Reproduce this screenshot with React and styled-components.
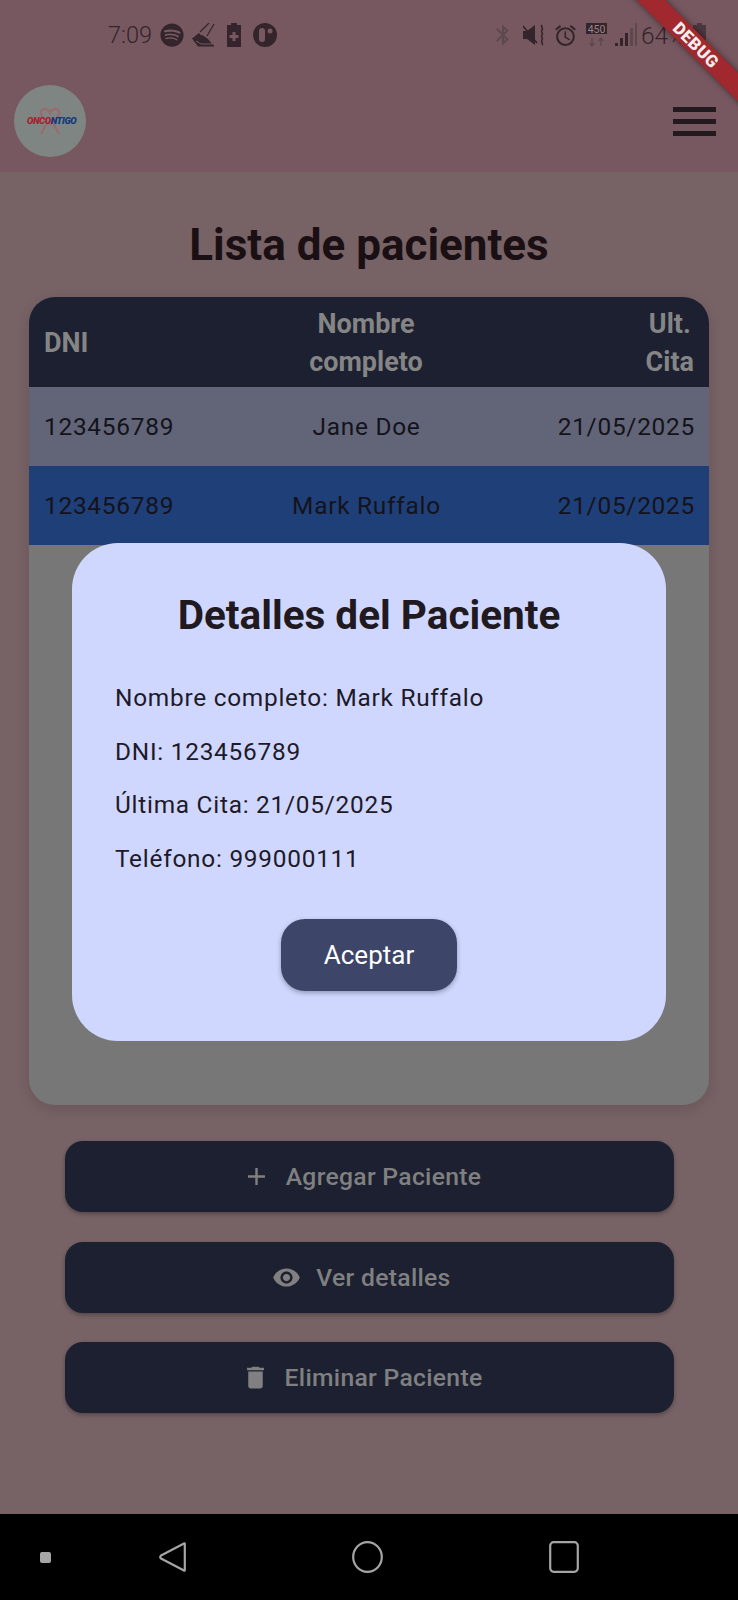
import React from 'react';
import styled, { createGlobalStyle } from 'styled-components';
import { FaSpotify } from 'react-icons/fa';
import { MdAdd, MdAlarm, MdBluetooth, MdDelete, MdVisibility } from 'react-icons/md';

const GlobalStyle = createGlobalStyle`
  html, body {
    margin: 0;
    padding: 0;
    background: #000;
  }
  * {
    box-sizing: border-box;
  }
`;

const patients = [
  { dni: '123456789', name: 'Jane Doe', date: '21/05/2025' },
  { dni: '123456789', name: 'Mark Ruffalo', date: '21/05/2025', selected: true },
];

const actions = [
  { label: 'Agregar Paciente', icon: <MdAdd size={29} /> },
  { label: 'Ver detalles', icon: <MdVisibility size={29} /> },
  { label: 'Eliminar Paciente', icon: <MdDelete size={29} /> },
];

const details = [
  'Nombre completo: Mark Ruffalo',
  'DNI: 123456789',
  'Última Cita: 21/05/2025',
  'Teléfono: 999000111',
];

const ShoeIcon = () => (
  <svg width="26" height="24" viewBox="0 0 26 24">
    <path stroke="#33252b" strokeWidth="1.200" fill="none" d="M8 9l9-9M15 13l7-12" />
    <path fill="#33252b" d="M0 15.500L7 10l1.500 2 2.500 .5 5 3.500 4 5 2 1v1.500H6z" />
    <path stroke="#775860" strokeWidth="1" fill="none" d="M4 18l5 3h12" />
  </svg>
);

const BatteryPlusIcon = () => (
  <svg width="19" height="24" viewBox="0 0 19 24">
    <path fill="#33252b" d="M5 0h6v2h4v22H1V2h4z" />
    <path fill="#775860" d="M6.500 9h3v3h3v3h-3v3h-3v-3h-3v-3h3z" />
  </svg>
);

const PillIcon = () => (
  <svg width="24" height="24" viewBox="0 0 24 24">
    <circle cx="12" cy="12" r="12" fill="#33252b" />
    <rect x="6" y="5" width="6" height="14" rx="3" fill="#775860" />
    <circle cx="17" cy="8" r="2.500" fill="#775860" />
  </svg>
);

const MuteIcon = () => (
  <svg width="22" height="22" viewBox="0 0 22 22">
    <path fill="#33252b" d="M0 7h4l8-6v20l-8-6H0z" />
    <path stroke="#33252b" strokeWidth="1.600" d="M0 2l14 17" />
    <path stroke="#33252b" strokeWidth="1.600" fill="none" d="M19 1c-2 2 2 3 0 5s2 3 0 5 2 3 0 5 2 3 0 5" />
  </svg>
);

const NetworkIcon = () => (
  <svg width="21" height="24" viewBox="0 0 21 24">
    <rect width="21" height="11" fill="#33252b" />
    <text x="10.500" y="9.500" textAnchor="middle" fontSize="10.500" fontFamily="Roboto, sans-serif" fill="#9a8288">450</text>
    <path stroke="#5d484e" strokeWidth="1.400" d="M6 15v8M3.500 20L6 23l2.500-3M15 23v-8M12.500 18l2.500-3 2.500 3" fill="none" />
  </svg>
);

const SignalIcon = () => (
  <svg width="22" height="24" viewBox="0 0 22 24">
    <rect x="0" y="20" width="3" height="3" fill="#33252b" />
    <rect x="5" y="15" width="3" height="8" fill="#33252b" />
    <rect x="10" y="10" width="3" height="13" fill="#33252b" />
    <rect x="15" y="5" width="3" height="18" fill="#5d484e" />
    <rect x="20" y="0" width="2" height="23" fill="#5d484e" />
  </svg>
);

const SmallBatteryIcon = () => (
  <svg width="13" height="24" viewBox="0 0 13 24">
    <path fill="#4a383e" d="M4 0h5v2h4v22H0V2h4z" />
  </svg>
);

const HamburgerIcon = () => (
  <svg width="43" height="29" viewBox="0 0 43 29" fill="#221a1f">
    <rect y="0" width="43" height="5" />
    <rect y="12" width="43" height="5" />
    <rect y="24" width="43" height="5" />
  </svg>
);

const RibbonMark = () => (
  <svg width="24" height="30" viewBox="0 0 24 30" fill="none" stroke="#9a6a70" strokeWidth="2.200">
    <path d="M12 7C9 1 2 2 3 8c1 4 5 7 9 10 4-3 8-6 9-10 1-6-6-7-9-1z" />
    <path d="M9 17L3 28M15 17l6 11" />
  </svg>
);

const BackIcon = () => (
  <svg width="27" height="32" viewBox="0 0 27 32" fill="none" stroke="#a5a5a5" strokeWidth="2.200" strokeLinejoin="round">
    <path d="M25 2.500c.3-.4.800-.2.800.3v26.400c0 .5-.5.700-.8.300L2 17.500c-.8-.8-.8-2.200 0-3z" />
  </svg>
);

const HomeIcon = () => (
  <svg width="31" height="32" viewBox="0 0 31 32" fill="none" stroke="#a5a5a5" strokeWidth="2.200">
    <ellipse cx="15.500" cy="16" rx="14.300" ry="14.800" />
  </svg>
);

const RecentIcon = () => (
  <svg width="30" height="32" viewBox="0 0 30 32" fill="none" stroke="#a5a5a5" strokeWidth="2.200">
    <rect x="1.200" y="1.200" width="27.600" height="29.600" rx="3.500" />
  </svg>
);

const App = () => {
  return (
    <Screen>
      <GlobalStyle />
      <TopArea>
        <StatusBar>
          <StatusGroup>
            <Clock>7:09</Clock>
            <FaSpotify size={24} color="#33252b" />
            <ShoeIcon />
            <BatteryPlusIcon />
            <PillIcon />
          </StatusGroup>
          <StatusGroup>
            <MdBluetooth size={24} color="#5d484e" />
            <MuteIcon />
            <MdAlarm size={25} color="#33252b" />
            <NetworkIcon />
            <SignalIcon />
            <BatteryText>64%</BatteryText>
            <SmallBatteryIcon />
          </StatusGroup>
        </StatusBar>
        <AppBar>
          <LogoCircle>
            <RibbonMark />
            <LogoText>
              <LogoRed>ONCO</LogoRed>
              <LogoBlue>NTIGO</LogoBlue>
            </LogoText>
          </LogoCircle>
          <HamburgerIcon />
        </AppBar>
      </TopArea>

      <Main>
        <PageTitle>Lista de pacientes</PageTitle>
        <TableCard>
          <HeadRow>
            <HeadCell>DNI</HeadCell>
            <HeadCell $align="center">Nombre<br />completo</HeadCell>
            <HeadCell $align="center" $end>Ult.<br />Cita</HeadCell>
          </HeadRow>
          {patients.map((p) => (
            <BodyRow key={p.name} $selected={p.selected}>
              <BodyCell $align="left">{p.dni}</BodyCell>
              <BodyCell $align="center">{p.name}</BodyCell>
              <BodyCell $align="right">{p.date}</BodyCell>
            </BodyRow>
          ))}
        </TableCard>
        <Actions>
          {actions.map((a) => (
            <ActionButton key={a.label}>
              {a.icon}
              {a.label}
            </ActionButton>
          ))}
        </Actions>
      </Main>

      <NavBar>
        <NavDot />
        <NavIcons>
          <BackIcon />
          <HomeIcon />
          <RecentIcon />
        </NavIcons>
      </NavBar>

      <DialogLayer>
        <Dialog>
          <DialogTitle>Detalles del Paciente</DialogTitle>
          <DetailList>
            {details.map((d) => (
              <DetailLine key={d}>{d}</DetailLine>
            ))}
          </DetailList>
          <AcceptButton>Aceptar</AcceptButton>
        </Dialog>
      </DialogLayer>

      <DebugBanner>DEBUG</DebugBanner>
    </Screen>
  );
};

const Screen = styled.div`
  position: relative;
  width: 738px;
  height: 1600px;
  overflow: hidden;
  display: flex;
  flex-direction: column;
  font-family: Roboto, "Liberation Sans", sans-serif;
  background: #776265;
`;

const TopArea = styled.header`
  height: 172px;
  background: #775860;
  padding: 15px 22px 0 14px;
  display: flex;
  flex-direction: column;
`;

const StatusBar = styled.div`
  height: 40px;
  padding: 0 10px 0 94px;
  display: flex;
  align-items: center;
  justify-content: space-between;
`;

const StatusGroup = styled.div`
  display: flex;
  align-items: center;
  gap: 8px;
`;

const Clock = styled.span`
  font-size: 23.500px;
  font-weight: 300;
  color: #33252b;
`;

const BatteryText = styled.span`
  width: 44px;
  margin-left: -4px;
  font-size: 24.500px;
  font-weight: 300;
  white-space: nowrap;
  color: #33252b;
`;

const AppBar = styled.div`
  margin-top: 30px;
  display: flex;
  align-items: center;
  justify-content: space-between;
`;

const LogoCircle = styled.div`
  position: relative;
  width: 72px;
  height: 72px;
  border-radius: 50%;
  background: #7f8583;
  display: flex;
  align-items: center;
  justify-content: center;
`;

const LogoText = styled.div`
  position: absolute;
  left: 13px;
  top: 30px;
  line-height: 12px;
  font-size: 9.500px;
  font-weight: 900;
  font-style: italic;
  letter-spacing: -0.4px;
  white-space: nowrap;
`;

const LogoRed = styled.span`
  color: #a82030;
`;

const LogoBlue = styled.span`
  color: #103a78;
`;

const Main = styled.main`
  flex: 1;
  padding: 48px 29px 0;
  display: flex;
  flex-direction: column;
  align-items: center;
`;

const PageTitle = styled.h1`
  margin: 0;
  height: 50px;
  line-height: 50px;
  font-size: 44px;
  font-weight: 700;
  color: #1a1014;
`;

const TableCard = styled.section`
  margin-top: 27px;
  width: 680px;
  height: 808px;
  flex-shrink: 0;
  background: #777777;
  border-radius: 26px;
  overflow: hidden;
  box-shadow: 0 4px 14px rgba(0, 0, 0, 0.12);
`;

const rowColumns = '215px 1fr 221px';

const HeadRow = styled.div`
  height: 90px;
  padding: 2px 15px 0;
  display: grid;
  grid-template-columns: ${rowColumns};
  align-items: center;
  background: #1c2030;
`;

const HeadCell = styled.div`
  justify-self: ${(p) => (p.$end ? 'end' : 'stretch')};
  font-size: 27px;
  font-weight: 700;
  line-height: 38px;
  color: #858585;
  text-align: ${(p) => p.$align || 'left'};
`;

const BodyRow = styled.div`
  height: 79px;
  padding: 0 14px 0 15px;
  display: grid;
  grid-template-columns: ${rowColumns};
  align-items: center;
  background: ${(p) => (p.$selected ? '#1f3f78' : '#626577')};
`;

const BodyCell = styled.div`
  font-size: 24.400px;
  letter-spacing: 0.75px;
  color: #14131c;
  text-align: ${(p) => p.$align};
`;

const Actions = styled.div`
  margin-top: 36px;
  width: 609px;
  display: flex;
  flex-direction: column;
  gap: 29.500px;
`;

const ActionButton = styled.button`
  height: 71px;
  padding: 0 15px 0 0;
  border: none;
  border-radius: 18px;
  background: #1c2030;
  color: #808080;
  font-family: inherit;
  font-size: 24.700px;
  font-weight: 500;
  letter-spacing: 0.3px;
  display: flex;
  align-items: center;
  justify-content: center;
  gap: 15px;
  box-shadow: 0 2px 4px rgba(0, 0, 0, 0.3);
`;

const NavBar = styled.nav`
  height: 86px;
  background: #000;
  padding: 0 0 0 40px;
  display: flex;
  align-items: center;
`;

const NavDot = styled.span`
  width: 11px;
  height: 11px;
  margin-right: 108px;
  border-radius: 2px;
  background: #a5a5a5;
`;

const NavIcons = styled.div`
  display: flex;
  align-items: center;
  gap: 166px;
`;

const DialogLayer = styled.div`
  position: absolute;
  left: 72px;
  top: 543px;
`;

const Dialog = styled.div`
  width: 594px;
  height: 498px;
  padding: 44px 43px 0;
  border-radius: 46px;
  background: #d0d7ff;
  display: flex;
  flex-direction: column;
  align-items: center;
`;

const DialogTitle = styled.h2`
  margin: 0;
  height: 56px;
  line-height: 56px;
  font-size: 40.500px;
  font-weight: 700;
  color: #201a20;
`;

const DetailList = styled.div`
  margin-top: 28px;
  align-self: stretch;
  display: flex;
  flex-direction: column;
`;

const DetailLine = styled.div`
  height: 53.700px;
  line-height: 53.700px;
  font-size: 24.400px;
  letter-spacing: 0.75px;
  color: #201a28;
`;

const AcceptButton = styled.button`
  margin-top: 33px;
  width: 176px;
  height: 72px;
  border: none;
  border-radius: 24px;
  background: #3d4568;
  color: #fff;
  font-family: inherit;
  font-size: 26px;
  font-weight: 400;
  box-shadow: 0 2px 5px rgba(0, 0, 0, 0.3);
`;

const DebugBanner = styled.div`
  position: absolute;
  left: 596px;
  top: 35px;
  width: 200px;
  height: 20px;
  line-height: 20px;
  transform: rotate(45deg);
  background: #a0282e;
  color: #f4ecec;
  font-size: 17px;
  font-weight: 900;
  text-align: center;
  letter-spacing: 0.5px;
  box-shadow: 0 0 6px rgba(0, 0, 0, 0.5);
`;

export default App;
